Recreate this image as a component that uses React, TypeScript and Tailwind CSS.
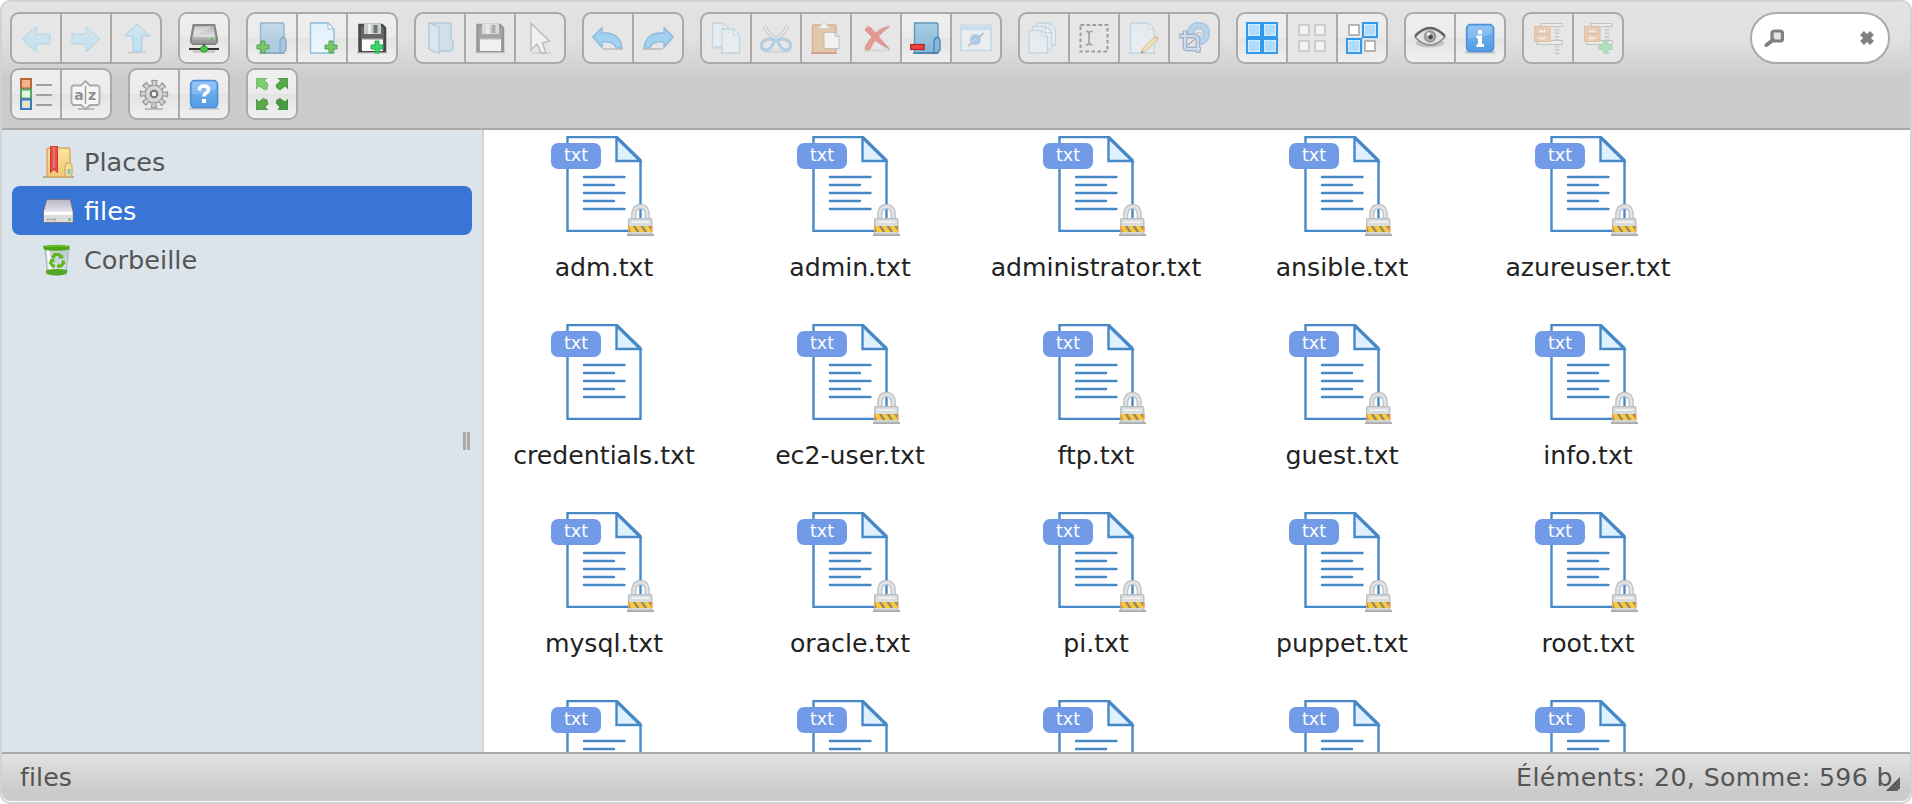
import type { ReactNode } from "react";

function Svg({ children, dim = 1 }: { children: ReactNode; dim?: number }) {
  return (
    <svg viewBox="0 0 32 32" className="block size-8 shrink-0" style={{ opacity: dim }}>
      {children}
    </svg>
  );
}

const Plus = ({ x, y, c = "#7cc66f", s = "#4fa544" }: { x: number; y: number; c?: string; s?: string }) => (
  <path
    d={`M${x - 2} ${y - 6}h4v4h4v4h-4v4h-4v-4h-4v-4h4z`}
    fill={c}
    stroke={s}
    strokeWidth="1"
  />
);

const Floppy = () => (
  <>
    <path d="M1 30.500H31" stroke="#000" strokeOpacity=".2" strokeWidth="2" />
    <path d="M3.500 3H26l3 3v23H3.500z" fill="#666" stroke="#474747" strokeWidth="2.500" />
    <path d="M8 2h17v10H8z" fill="#c9cbcc" />
    <path d="M17.500 3h4v8h-4z" fill="#6d7478" />
    <path d="M12 2h3v10h-3z" fill="#ececec" />
    <path d="M6 17h21v12H6z" fill="#fbfbfb" />
    <path d="M6 16h21v1.500H6z" fill="#888" />
  </>
);

const Folder = () => (
  <>
    <path d="M4.500 1H27l1 1v29H4.500z" fill="url(#folder)" stroke="#5f97bf" strokeWidth="1.400" />
    <path d="M24 30V18l2-2.500h2.500l1.500 3V28l-3 3h-4z" fill="#86b7d8" stroke="#4a82ad" strokeWidth="1.300" />
    <path d="M3 31h25" stroke="#4a7ea5" strokeWidth="1.500" />
  </>
);

const Page = ({ x, y, w, h }: { x: number; y: number; w: number; h: number }) => (
  <>
    <path
      d={`M${x} ${y}h${w - 6}l6 6v${h - 6}h${-w}z`}
      fill="url(#page)"
      stroke="#8dbcdb"
      strokeWidth="1.300"
    />
    <path d={`M${x + w - 6} ${y}v6h6z`} fill="#fff" stroke="#8dbcdb" strokeWidth="1" />
  </>
);

const BlueSquare = ({ x, y }: { x: number; y: number }) => (
  <>
    <rect x={x + 1} y={y + 1} width="14" height="14" fill="#b0dcff" stroke="#339aeb" strokeWidth="2.200" />
    <rect x={x + 2.500} y={y + 2.500} width="11" height="11" fill="none" stroke="#d6edff" strokeWidth="1" />
  </>
);

const GreySquare = ({ x, y }: { x: number; y: number }) => (
  <rect x={x + 3} y={y + 3} width="10" height="10" fill="#fff" stroke="#b5b5b5" strokeWidth="2" />
);

const BlueBadge = () => (
  <>
    <path d="M1 30.500H31" stroke="#000" strokeOpacity=".18" strokeWidth="2" />
    <rect x="2.600" y="2.600" width="27" height="27" rx="4" fill="url(#badge)" stroke="#4d8fd8" strokeWidth="1.500" />
    <path d="M4 16Q18 17 28 11V6q0-2-2-2H6Q4 4 4 6z" fill="#fff" opacity=".18" />
  </>
);

const Cabinet = () => (
  <>
    <path d="M25 4V32" stroke="#9a9a9a" strokeWidth="4.500" strokeDasharray="1.500 1.800" />
    <path d="M9 1.500H30v3H9zM5 18.500H30v4H5z" fill="#f4f4f4" stroke="#8c8c8c" strokeWidth="1.100" />
    <rect x="2.500" y="4.500" width="15.500" height="15" fill="#eda566" stroke="#cf8a4c" strokeWidth="1.200" />
    <path d="M4 12H17" stroke="#c2804c" strokeWidth="1.200" />
    <path d="M8 7.500v2h4.500v-2M8 14.500v2h4.500v-2" stroke="#fff" strokeWidth="1.400" fill="none" />
  </>
);

const undoPath = "M.700 15L10 5.500V11C21 10 29 15 30 26H24.500C22 20 17 19.500 10 20V25.500z";

const icons: Record<string, ReactNode> = {
  back: <path d="M2 17L16 5V12H30V22H16V30z" fill="url(#arrow)" stroke="#84bde0" />,
  forward: <path d="M30 17L16 5V12H2V22H16V30z" fill="url(#arrow)" stroke="#84bde0" />,
  up: (
    <>
      <path d="M8 30.500H26" stroke="#000" strokeOpacity=".2" strokeWidth="1.500" />
      <path d="M17 2L29.500 14H22V29.500H13V14H4.500z" fill="url(#arrow)" stroke="#84bde0" />
    </>
  ),
  netmount: (
    <>
      <path d="M5.500 3H26.500L29 17V20L27 22H5L3 20V17z" fill="#b5b5b5" stroke="#858585" strokeWidth="2" />
      <path d="M7 4.500H25L27 15H5z" fill="url(#metal)" />
      <path d="M7 5L5.500 12Q18 11 23 4.500z" fill="#fff" opacity=".35" />
      <path d="M4 17.500V20l2 1H26l2-1V17.500z" fill="#9d9d9d" />
      <circle cx="24" cy="17.500" r="1.300" fill="#42ca42" />
      <path d="M1 27H31" stroke="#333" strokeWidth="2.200" />
      <path d="M5 29.500H27" stroke="#000" strokeOpacity=".2" strokeWidth="2" />
      <path d="M16 22V25" stroke="#555" strokeWidth="2.500" />
      <path d="M14.500 24h3l2 2v2l-2 2h-3l-2-2v-2z" fill="#46c942" stroke="#2a8a2a" />
    </>
  ),
  mkdir: (
    <>
      <g opacity=".62"><Folder /></g>
      <Plus x={7} y={25} />
    </>
  ),
  mkfile: (
    <>
      <Page x={4.500} y={1} w={23.500} h={30} />
      <Plus x={25} y={25} />
    </>
  ),
  upload: (
    <>
      <Floppy />
      <Plus x={21} y={25} c="#3fd46b" s="#1fae4b" />
    </>
  ),
  open: (
    <>
      <path d="M5 1H27V18l2 1v8l-2 2H15L5 27z" fill="#b9d8ec" stroke="#75abd0" strokeWidth="1.400" />
      <path d="M5 1L15 5V31.500L5 27z" fill="#cfe5f3" stroke="#75abd0" strokeWidth="1.300" />
    </>
  ),
  save: <Floppy />,
  cursor: (
    <>
      <path d="M8 31H27" stroke="#000" strokeOpacity=".2" strokeWidth="1.500" />
      <path d="M7 1.500V28L13 22L17 31H22L18.500 21L25.500 19z" fill="#fff" stroke="#888" strokeWidth="1.500" />
    </>
  ),
  undo: (
    <>
      <path d="M11 27H31" stroke="#000" strokeOpacity=".15" strokeWidth="2" />
      <path d={undoPath} fill="#9ccff2" stroke="#7fb3dc" strokeWidth="1.200" />
    </>
  ),
  redo: (
    <g transform="translate(32 0) scale(-1 1)">
      <path d="M11 27H31" stroke="#000" strokeOpacity=".15" strokeWidth="2" />
      <path d={undoPath} fill="#9ccff2" stroke="#7fb3dc" strokeWidth="1.200" />
    </g>
  ),
  copy: (
    <>
      <path d="M1 26H20M10 31.500H31" stroke="#000" strokeOpacity=".15" strokeWidth="1.500" />
      <Page x={2.500} y={1} w={16.500} h={24} />
      <Page x={12} y={7} w={17.500} h={24} />
    </>
  ),
  cut: (
    <>
      <path d="M4 29.500H29" stroke="#000" strokeOpacity=".12" strokeWidth="3" />
      <path d="M4.500 4Q6 10 20 20M27.500 4Q26 10 12 20" stroke="#8c8c8c" strokeWidth="3.500" fill="none" />
      <path d="M4.500 4Q6 10 20 20M27.500 4Q26 10 12 20" stroke="#f4f4f4" strokeWidth="1.800" fill="none" />
      <path d="M15 18Q5 15.500 2 21Q0 27 5 28Q11 29 15 18zM17 18Q27 15.500 30 21Q32 27 27 28Q21 29 17 18z" fill="none" stroke="#76b0dd" strokeWidth="3.200" />
    </>
  ),
  paste: (
    <>
      <rect x="2.500" y="3" width="23.500" height="28" rx="1" fill="#dda76c" stroke="#c28343" strokeWidth="1.500" />
      <path d="M1 31.200H27" stroke="#b95545" strokeWidth="1.600" />
      <path d="M8 6.500L11 3Q14-1 17 3L20 6.500z" fill="#fbfbfb" stroke="#aaa" strokeWidth=".8" />
      <path d="M14 10.500H25L29 14.500V26.500H14z" fill="#fff" stroke="#999" />
      <path d="M25 10.500V14.500H29z" fill="#e8e8e8" stroke="#999" strokeWidth=".8" />
    </>
  ),
  rm: (
    <>
      <path d="M4 28.500H30" stroke="#000" strokeOpacity=".12" strokeWidth="2.500" />
      <path d="M5 8Q8 2 12 7Q22 19 29.500 27Q18 22 11 14Q7 10 5 8z" fill="#e0402f" stroke="#c93a2c" />
      <path d="M29.500 4.500Q20 5 12 15Q6 22 5 26Q6 30 10 27Q15 15 29.500 4.500z" fill="#e0402f" stroke="#c93a2c" />
    </>
  ),
  empty: (
    <>
      <Folder />
      <rect x=".7" y="22.500" width="13.500" height="5" fill="#e8463c" stroke="#b8261f" strokeWidth="1.200" />
    </>
  ),
  hide: (
    <>
      <rect x="1" y="3.500" width="30" height="25" fill="#f4f8fc" stroke="#a3cbee" strokeWidth="2" />
      <path d="M1 6.500H31" stroke="#a3cbee" strokeWidth="3.500" />
      <circle cx="15.500" cy="17.500" r="5.500" fill="#5d9fe0" />
      <path d="M8 24L24 11" stroke="#6790ba" strokeWidth="2" />
      <path d="M12 20L16 17" stroke="#cfe2f5" strokeWidth="1" />
    </>
  ),
  duplicate: (
    <>
      <Page x={9} y={1} w={18.500} h={22} />
      <Page x={5} y={4.500} w={18.500} h={23} />
      <Page x={1} y={8.500} w={18.500} h={22.500} />
    </>
  ),
  rename: (
    <>
      <rect x="2.500" y="3" width="27" height="26.500" fill="none" stroke="#555" strokeWidth="2" strokeDasharray="3.600 2.400" />
      <path d="M8 9.500Q11 9 11 11.500Q11 9 14.500 9.500M11 11V21M8 22.500Q11 23 11 21Q11 23 14.500 22.500" fill="none" stroke="#666" strokeWidth="1.800" />
    </>
  ),
  edit: (
    <>
      <path d="M0 31H28" stroke="#000" strokeOpacity=".15" strokeWidth="1.500" />
      <Page x={2.500} y={1} w={23.500} h={30} />
      <path d="M13 31L15 26L26 15L30 18L18 29z" fill="#f4d66c" stroke="#bd9445" />
      <path d="M26 15l2-1.500l3 3l-1.500 1.500z" fill="#e58b6c" />
      <path d="M12.500 31.500L14 28.500L16 30.500z" fill="#222" />
    </>
  ),
  resize: (
    <>
      <path d="M12 13Q13 3.500 21.500 3.500Q29 4.500 28.500 12Q28 18 22 20" fill="none" stroke="#5d9fdc" strokeWidth="7" />
      <path d="M12 13Q13 3.500 21.500 3.500Q29 4.500 28.500 12Q28 18 22 20" fill="none" stroke="#8cc3f2" strokeWidth="4.500" />
      <path d="M15 11H24L20 17z" fill="#f0f0f0" stroke="#999" />
      <path d="M7 8.500V25Q7 27 9 27H23M1 14H16Q20 14 20 18V31" fill="none" stroke="#5d83b4" strokeWidth="4.800" />
      <path d="M7 9.500V25Q7 27 9 27H22M2 14H16Q20 14 20 18V30" fill="none" stroke="#b6d3ee" strokeWidth="2" />
      <path d="M10 23L17 17" stroke="#777" strokeWidth="1.500" />
    </>
  ),
  selectall: (
    <>
      <BlueSquare x={0} y={0} />
      <BlueSquare x={16} y={0} />
      <BlueSquare x={0} y={16} />
      <BlueSquare x={16} y={16} />
    </>
  ),
  selectnone: (
    <>
      <GreySquare x={0} y={0} />
      <GreySquare x={16} y={0} />
      <GreySquare x={0} y={16} />
      <GreySquare x={16} y={16} />
    </>
  ),
  selectinvert: (
    <>
      <GreySquare x={0} y={0} />
      <BlueSquare x={16} y={0} />
      <BlueSquare x={0} y={16} />
      <GreySquare x={16} y={16} />
    </>
  ),
  quicklook: (
    <>
      <ellipse cx="16" cy="21" rx="14" ry="4.500" fill="#000" opacity=".16" />
      <path d="M1 15Q16-1.500 31 15Q16 31 1 15z" fill="#e4e4e4" stroke="#888" strokeWidth="1.600" />
      <path d="M1 14Q16-2.500 31 14" fill="none" stroke="#5f5f5f" strokeWidth="2" />
      <circle cx="16" cy="14.500" r="6.500" fill="#b2b5b8" />
      <circle cx="16" cy="14.500" r="5" fill="none" stroke="#8d9296" strokeWidth="1.500" />
      <circle cx="16.500" cy="15" r="2.400" fill="#4b4b4b" />
      <circle cx="14.500" cy="12" r="1.800" fill="#f0f0f0" />
    </>
  ),
  info: (
    <>
      <BlueBadge />
      <path d="M14 8h4v4h-4zM12.500 13.500H18V22h2v3h-7.500v-3H14v-5.500h-1.500z" fill="#fff" />
    </>
  ),
  extract: <Cabinet />,
  archive: (
    <>
      <Cabinet />
      <path d="M21 19h5v4h4v4.500h-3L23.500 32L20 27.500h-3V23h4z" fill="#5fd97e" stroke="#49bf68" />
    </>
  ),
  list: (
    <>
      <rect x="1" y="1" width="10" height="9.500" fill="#f1b28c" stroke="#b5683a" strokeWidth="2" />
      <rect x="1" y="11.500" width="10" height="9" fill="#e3f4e0" stroke="#58a566" strokeWidth="2" />
      <rect x="1" y="21.500" width="10" height="9.500" fill="#cfe0fa" stroke="#4377b5" strokeWidth="2" />
      <circle cx="6" cy="26" r="2.600" fill="#f7e89a" />
      <path d="M16 7H32M16 17H32M16 27H32" stroke="#99a1a7" strokeWidth="2" />
    </>
  ),
  sort: (
    <>
      <path d="M8 31H24" stroke="#000" strokeOpacity=".2" strokeWidth="2" />
      <path d="M3 7.500H11L15.500 3L20 7.500H28L29.500 9V25L28 27H20L15.500 31L11 27H3L1.500 25V9z" fill="#f6f6f6" stroke="#aaa" strokeWidth="1.800" />
      <path d="M15.500 8V26" stroke="#999" strokeWidth="1.400" />
      <text x="9" y="22" textAnchor="middle" fontFamily="DejaVu Sans" fontSize="14" fontWeight="bold" fill="#8f8f8f">a</text>
      <text x="22" y="22" textAnchor="middle" fontFamily="DejaVu Sans" fontSize="14" fontWeight="bold" fill="#8f8f8f">z</text>
    </>
  ),
  gear: (
    <>
      <path d="M7 31H25" stroke="#000" strokeOpacity=".2" strokeWidth="2" />
      <circle cx="16" cy="16" r="11.500" fill="none" stroke="#999" strokeWidth="5.500" strokeDasharray="5.532 3.500" strokeDashoffset="2.766" />
      <circle cx="16" cy="16" r="9.300" fill="#c9c9c9" stroke="#999" strokeWidth="1.500" />
      <circle cx="16" cy="16" r="10.900" fill="none" stroke="#d2d2d2" strokeWidth="4" strokeDasharray="3.200 5.361" strokeDashoffset="1.600" />
      <circle cx="16" cy="16" r="6.500" fill="none" stroke="#dcdcdc" strokeWidth="1.800" />
      <circle cx="16" cy="16" r="3.200" fill="#fff" stroke="#777" strokeWidth="2" />
    </>
  ),
  help: (
    <>
      <BlueBadge />
      <path d="M11.500 12.500V10.500Q12.500 8 16 8Q20.500 8 20.500 11.500Q20.500 14 17.500 15.500Q16 16.500 16 18.500" fill="none" stroke="#fff" strokeWidth="3.400" />
      <path d="M14 21h4v4h-4z" fill="#fff" />
    </>
  ),
  fullscreen: (
    <>
      <path d="M0 0H11L8.500 2.500L12 6L11 11L9 12L3 8L0 11z" fill="#7fcb6f" stroke="#63b056" strokeWidth=".8" />
      <path d="M32 0H22L24.500 3L20 7L21 10L24 12L29 8L32 11z" fill="#58a84c" stroke="#459139" strokeWidth=".8" />
      <path d="M0 32H12L9 29L12 26L11 22L7 20.500L3 24L0 21z" fill="#5aa84c" stroke="#43913a" strokeWidth=".8" />
      <path d="M32 32H22L24 29L20 25L21 22L24 20.500L29 24L32 21z" fill="#4a9a3f" stroke="#3a8730" strokeWidth=".8" />
    </>
  ),
};

type Button = { name: string; dim?: number };

const firstRow: Button[][] = [
  [{ name: "back", dim: 0.5 }, { name: "forward", dim: 0.5 }, { name: "up", dim: 0.6 }],
  [{ name: "netmount" }],
  [{ name: "mkdir" }, { name: "mkfile" }, { name: "upload" }],
  [{ name: "open", dim: 0.45 }, { name: "save", dim: 0.5 }, { name: "cursor", dim: 0.45 }],
  [{ name: "undo", dim: 0.9 }, { name: "redo", dim: 0.9 }],
  [
    { name: "copy", dim: 0.4 },
    { name: "cut", dim: 0.45 },
    { name: "paste", dim: 0.5 },
    { name: "rm", dim: 0.45 },
    { name: "empty" },
    { name: "hide", dim: 0.4 },
  ],
  [{ name: "duplicate", dim: 0.4 }, { name: "rename", dim: 0.5 }, { name: "edit", dim: 0.4 }, { name: "resize", dim: 0.5 }],
  [{ name: "selectall" }, { name: "selectnone", dim: 0.5 }, { name: "selectinvert" }],
  [{ name: "quicklook" }, { name: "info" }],
  [{ name: "extract", dim: 0.4 }, { name: "archive", dim: 0.4 }],
];

const secondRow: Button[][] = [
  [{ name: "list" }, { name: "sort" }],
  [{ name: "gear" }, { name: "help" }],
  [{ name: "fullscreen" }],
];

function ButtonGroup({ buttons }: { buttons: Button[] }) {
  return (
    <div className="flex h-[52px] divide-x-2 divide-[#aaa] overflow-hidden rounded-[9px] border-2 border-[#aaa] bg-[#aaa]">
      {buttons.map(({ name, dim }) => (
        <div
          key={name}
          className={
            "box-content flex h-12 w-12 items-center justify-center " +
            (dim ? "bg-[#e6e6e6]" : "bg-[linear-gradient(#efefef_0%,#ebebeb_49%,#e3e3e3_51%,#f0f0f0_100%)]")
          }
        >
          <Svg dim={dim}>{icons[name]}</Svg>
        </div>
      ))}
    </div>
  );
}

function Lock() {
  return (
    <svg viewBox="0 0 28 32" preserveAspectRatio="none" className="absolute top-[68px] left-[76px] h-8 w-[27px]">
      <path d="M0 31H28" stroke="#aaa" strokeWidth="2" />
      <path d="M7 17V11Q7 2.500 14 2.500Q21 2.500 21 11V17" fill="none" stroke="#bcc1c4" strokeWidth="5.400" />
      <path d="M7 17V11Q7 2.500 14 2.500Q21 2.500 21 11V17" fill="none" stroke="#dfe3e5" strokeWidth="2.800" />
      <rect x="1.700" y="14.700" width="24" height="15.500" rx="1" fill="#dadddf" stroke="#b9bdbf" strokeWidth="1.300" />
      <path d="M5 18H23" stroke="#f3f4f5" strokeWidth="1.500" />
      <path d="M1.500 22H26V28H1.500z" fill="#9a8a64" />
      <path d="M2 22H6L10 28H4zM9 22H14L18 28H13zM17 22H22L26 28H21z" fill="#f6ca40" />
      <path d="M1 22h1.500v5.500H1zM25 22h1.500v5.500H25z" fill="#f0a05c" />
    </svg>
  );
}

function FileItem({ name, locked }: { name?: string; locked?: boolean }) {
  return (
    <div className="flex h-[188px] w-[246px] flex-col items-center">
      <div className="relative h-24 w-[106px]">
        <svg viewBox="0 0 106 96" className="block h-24 w-[106px]">
          <path d="M16.500 1H66L89.500 24V95H16.500z" fill="#fff" stroke="#4788c7" strokeWidth="2.400" />
          <path d="M65.500 2V25H89z" fill="#dff0fe" stroke="#4788c7" strokeWidth="2.400" />
          <path d="M33 41H73.500M33 49H63M33 57H73.500M33 65H63M33 73H73.500" stroke="#4788c7" strokeWidth="2.400" strokeLinecap="round" />
        </svg>
        <div className="absolute top-[7px] left-0 flex h-[26px] w-[50px] items-center justify-center rounded-[7px] bg-[#719be6] pb-px text-[17.500px] leading-none text-white">
          txt
        </div>
        {locked && <Lock />}
      </div>
      {name && (
        <div className="mt-[21px] text-[25.200px] leading-[30px] whitespace-nowrap text-[#222]">{name}</div>
      )}
    </div>
  );
}

const files = [
  "adm.txt", "admin.txt", "administrator.txt", "ansible.txt", "azureuser.txt",
  "credentials.txt", "ec2-user.txt", "ftp.txt", "guest.txt", "info.txt",
  "mysql.txt", "oracle.txt", "pi.txt", "puppet.txt", "root.txt",
];

function PlacesIcon() {
  return (
    <Svg>
      <path d="M0 31H31" stroke="#000" strokeOpacity=".25" strokeWidth="2" />
      <path d="M4 3L6 2H26L27 4V31H4z" fill="url(#gold)" stroke="#d9a866" strokeWidth="1.500" />
      <path d="M22 30V20L24 17H27L29 19V28L27 31H22z" fill="#f6dc9b" stroke="#d9a866" strokeWidth="1.300" />
      <path d="M26 23V28" stroke="#6fc2dc" strokeWidth="2.500" />
      <path d="M7.500 0H14.500V26.500L11 23.500L7.500 26.500z" fill="#e44d48" stroke="#d03b39" />
      <path d="M11 1V22" stroke="#f0736d" strokeWidth="2" />
    </Svg>
  );
}

function DriveIcon() {
  return (
    <Svg>
      <path d="M4 4.500H27L30 17V27.500H.500V17z" fill="#f0f0f0" stroke="#77777f" strokeWidth="1" />
      <path d="M4.500 5H26.500L29.500 16.500H1z" fill="url(#drive)" />
      <path d="M1 17H29.500V20H1z" fill="#fff" />
      <path d="M1 20H29.500V27H1z" fill="#dcdcde" />
      <path d="M4 24.500H14" stroke="#999" strokeWidth="2" strokeDasharray="1.500 1" />
      <circle cx="26.500" cy="24.500" r="1.300" fill="#4fbf5a" />
    </Svg>
  );
}

function TrashIcon() {
  return (
    <Svg>
      <path d="M2 5L4.500 29Q14 33 23 29L25.500 5z" fill="url(#glass)" stroke="#9aabb5" strokeWidth=".8" />
      <path d="M5 7L7.500 27" stroke="#fff" strokeWidth="3" />
      <path d="M3 26Q14 24 24.500 26L23.500 30Q14 33 3.500 30z" fill="#55a528" />
      <path d="M0 2Q14-.5 26.500 2V5.500Q14 8 1 5.500z" fill="#4fa714" />
      <path d="M3 2.500Q14 1 24.500 2.500" stroke="#80cf3b" strokeWidth="1.200" fill="none" />
      <path d="M9.500 14L12 10.500H16L18 13.500M20 16.500L20.500 19L18 22H15M12 22H10L7.500 19L9 16" fill="none" stroke="#62b51d" strokeWidth="3.200" />
      <path d="M15.500 14.500L20.500 14.500L20 10.500zM16 19L13.500 22L16 25zM6.500 15.500L11 14.500L12 18.500z" fill="#62b51d" />
    </Svg>
  );
}

function TreeRow({ icon, label, active }: { icon: ReactNode; label: string; active?: boolean }) {
  return (
    <div
      className={
        "flex h-[49px] items-center gap-[9px] rounded-lg pl-[31px] text-[25.600px] leading-none " +
        (active ? "bg-[#3875d7] text-white" : "text-[#555]")
      }
    >
      {icon}
      <span className="pt-[3px]">{label}</span>
    </div>
  );
}

const defs: [string, string, string][] = [
  ["folder", "#a9cfe6", "#83b6d8"],
  ["page", "#e1f1fb", "#eef7fd"],
  ["badge", "#7cb8f2", "#539be4"],
  ["arrow", "#c8e4f5", "#9fdcff"],
  ["metal", "#b4b4b4", "#e2e2e2"],
  ["gold", "#fbe59b", "#efc777"],
  ["drive", "#b9b9c6", "#e3e3ea"],
  ["glass", "#b9cbd3", "#dfe8ec"],
];

export default function App() {
  return (
    <div className="h-[804px] w-[1912px] overflow-hidden bg-white font-['DejaVu_Sans',Verdana,sans-serif]">
      <svg className="absolute size-0">
        <defs>
          {defs.map(([id, a, b]) => (
            <linearGradient key={id} id={id} x1="0" y1="0" x2="0" y2="1">
              <stop offset="0" stopColor={a} />
              <stop offset="1" stopColor={b} />
            </linearGradient>
          ))}
        </defs>
      </svg>
      <div className="flex h-full flex-col overflow-hidden rounded-[10px] border-2 border-[#d3d3d3] pb-px">
        <header className="flex h-32 shrink-0 justify-between border-b-2 border-[#aaa] bg-[linear-gradient(#e3e3e3_0,#e0e0e0_38px,#cbcbcb_78px,#cbcbcb_100%)] px-2 pt-[10px]">
          <div className="flex flex-col gap-1">
            <div className="flex gap-4">
              {firstRow.map((g) => <ButtonGroup key={g[0].name} buttons={g} />)}
            </div>
            <div className="flex gap-4">
              {secondRow.map((g) => <ButtonGroup key={g[0].name} buttons={g} />)}
            </div>
          </div>
          <div className="mr-3 flex h-[52px] w-[140px] items-center justify-between rounded-full border-2 border-[#aaa] bg-white pr-[14px] pl-3">
            <svg viewBox="0 0 20 18" className="h-[18px] w-5">
              <rect x="8" y="2" width="10.500" height="10" rx="2.500" fill="#e3e3e3" stroke="#808080" strokeWidth="3.200" />
              <path d="M9 11L2.500 16" stroke="#808080" strokeWidth="4" strokeLinecap="round" />
            </svg>
            <svg viewBox="0 0 14 14" className="h-[14px] w-[14px]">
              <path d="M2 2L12 12M12 2L2 12" stroke="#808080" strokeWidth="5.500" />
            </svg>
          </div>
        </header>

        <div className="flex min-h-0 flex-1">
          <nav className="relative w-[482px] shrink-0 border-r-2 border-[#d3d3d3] bg-[#dce4eb] pt-[7px] pr-[10px] pl-[10px]">
            <TreeRow icon={<PlacesIcon />} label="Places" />
            <TreeRow icon={<DriveIcon />} label="files" active />
            <TreeRow icon={<TrashIcon />} label="Corbeille" />
            <div className="absolute top-[302px] right-[12px] flex h-[18px] w-[7px] justify-between">
              <div className="w-[3px] bg-[#aaa]" />
              <div className="w-[3px] bg-[#aaa]" />
            </div>
          </nav>
          <main className="min-w-0 flex-1 overflow-hidden bg-white pt-[6px]">
            <div className="-ml-[3px] grid w-[1230px] grid-cols-5">
              {files.map((f) => <FileItem key={f} name={f} locked={f !== "credentials.txt"} />)}
              {[0, 1, 2, 3, 4].map((n) => <FileItem key={n} />)}
            </div>
          </main>
        </div>

        <footer className="relative flex h-[49px] shrink-0 items-center justify-between rounded-b-lg border-t-2 border-[#aaa] bg-[linear-gradient(#e2e2e2,#cbcbcb_80%)] pr-[17px] pl-[18px] text-[25.200px] leading-none text-[#555]">
          <span className="tracking-[0.1px]">files</span>
          <span className="tracking-[0.4px]">Éléments: 20, Somme: 596 b</span>
          <svg viewBox="0 0 16 16" className="absolute right-[9px] bottom-[9px] size-4">
            <path d="M1 15L15 1V12L12 15z" fill="#555" />
            <path d="M5 15L15 5M9 15L15 9" stroke="#8d8d8d" strokeWidth="1" strokeDasharray="1.500 1" />
          </svg>
        </footer>
      </div>
    </div>
  );
}
